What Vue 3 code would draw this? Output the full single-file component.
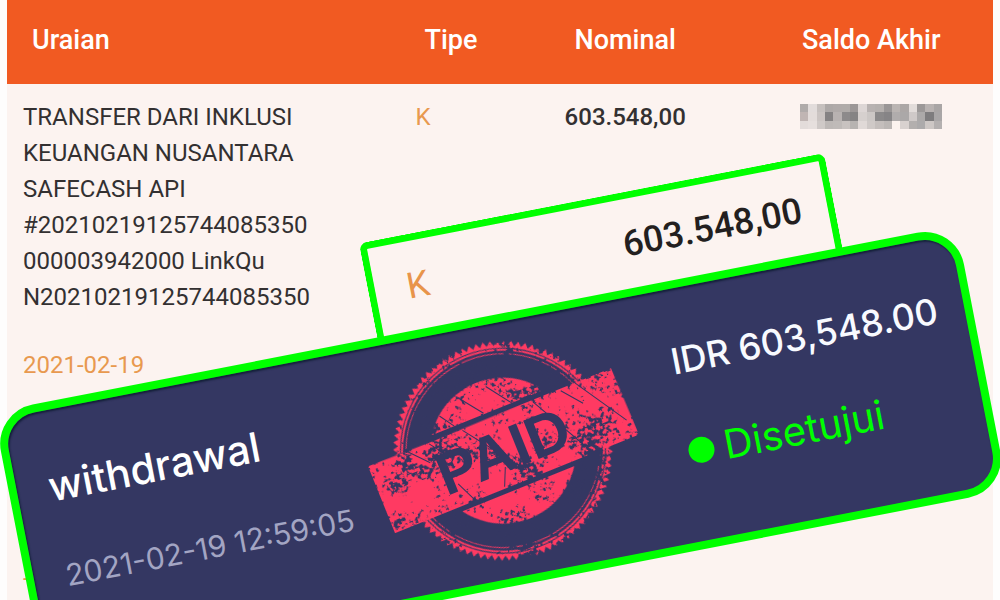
<script setup>
const rows = [
  {
    lines: [
      'TRANSFER DARI INKLUSI',
      'KEUANGAN NUSANTARA',
      'SAFECASH API',
      '#20210219125744085350',
      '000003942000 LinkQu',
      'N20210219125744085350',
    ],
    date: '2021-02-19',
    type: 'K',
    amount: '603.548,00',
  },
]

const mosaic = [
  'b0abaa e2dcdb c6c0be ada8a7 b0aaa9 b0aba9 9c9797 ddd6d5 b8b2b1 b5b0ae 9a9696 bab4b2 aca7a6 e2dcda 9c9898 b8b2b1 a9a5a5',
  'c0b5b3 e3dcda cbc4c2 858283 b8b2b1 8d8a8b 858384 d6d0ce ccc7c5 8b898a 868486 b0acac aba8a8 cfc9c8 aca9a9 7e7c7e a9a6a7',
  'e3dcda e6dfdd cfc9c7 bdb8b6 bfbab8 c8c2c0 b7b3b1 e0d9d7 cfc9c7 c4bebc bcb7b5 fcf3ef d8d1cf b3afae acaaab cdc7c5 b4b0b0',
].map((r) => r.split(' '))

const TEETH = 96
const gear = Array.from({ length: TEETH * 2 }, (_, i) => {
  const a = (Math.PI * i) / TEETH
  const r = i % 2 ? 105 : 110
  return `${(r * Math.cos(a)).toFixed(2)},${(r * Math.sin(a)).toFixed(2)}`
}).join(' ')

const scratches = [
  [-46, -56, -36, -41], [-22, -66, -4, -42], [8, -66, 26, -41], [-66, -34, -50, -12],
  [-30, -34, -8, -4], [46, -34, 82, 34], [92, -36, 126, 18], [-54, 14, -44, 36],
  [-4, 16, -12, 34], [76, -34, 92, -14], [-90, -36, -72, -16],
]
</script>

<template>
  <main class="page">
    <table class="ledger">
      <colgroup>
        <col class="c-desc" /><col class="c-type" /><col class="c-amount" /><col class="c-balance" />
      </colgroup>
      <thead>
        <tr>
          <th class="left">Uraian</th>
          <th class="left">Tipe</th>
          <th>Nominal</th>
          <th>Saldo Akhir</th>
        </tr>
      </thead>
      <tbody>
        <tr v-for="row in rows" :key="row.date">
          <td>
            <div v-for="line in row.lines" :key="line">{{ line }}</div>
            <div class="date">{{ row.date }}</div>
          </td>
          <td class="type">{{ row.type }}</td>
          <td class="amount">{{ row.amount }}</td>
          <td class="balance">
            <svg class="mosaic" viewBox="0 0 17 3" preserveAspectRatio="none" shape-rendering="crispEdges" role="img" aria-label="Saldo disamarkan">
              <template v-for="(r, y) in mosaic" :key="y">
                <rect v-for="(c, x) in r" :key="x" :x="x" :y="y" width="1" height="1" :fill="'#' + c" />
              </template>
            </svg>
          </td>
        </tr>
        <tr>
          <td class="next">-</td>
          <td></td>
          <td></td>
          <td></td>
        </tr>
      </tbody>
    </table>

    <section class="proof">
      <div class="strip">
        <span class="strip-type">K</span>
        <strong class="strip-amount">603.548,00</strong>
      </div>
      <article class="card">
        <div class="info">
          <h2 class="title">withdrawal</h2>
          <time class="time">2021-02-19 12:59:05</time>
        </div>
        <div class="result">
          <div class="sum">IDR 603,548.00</div>
          <div class="status"><i class="dot"></i>Disetujui</div>
        </div>
        <svg class="stamp" viewBox="-136 -136 272 272" role="img" aria-label="PAID">
          <defs>
            <filter id="grunge" filterUnits="userSpaceOnUse" x="-136" y="-136" width="272" height="272" color-interpolation-filters="sRGB">
              <feTurbulence type="fractalNoise" baseFrequency="0.24" numOctaves="3" seed="7" result="fine" />
              <feTurbulence type="fractalNoise" baseFrequency="0.03" numOctaves="2" seed="12" result="coarse" />
              <feComposite in="fine" in2="coarse" operator="arithmetic" k2="0.5" k3="0.5" result="mix" />
              <feColorMatrix in="mix" type="matrix" values="0 0 0 0 0  0 0 0 0 0  0 0 0 0 0  24 0 0 0 -13.2" result="holes" />
              <feComposite in="SourceGraphic" in2="holes" operator="out" />
            </filter>
            <clipPath id="caps">
              <path d="M-80-80H80V-41H-80ZM-80 41H80V80H-80Z" />
            </clipPath>
            <clipPath id="rim">
              <path d="M-120-120H120V-36H-120ZM-120 36H120V120H-120Z" />
            </clipPath>
          </defs>
          <g transform="rotate(-11)">
            <g filter="url(#grunge)">
              <g clip-path="url(#rim)">
                <polygon class="ink" :points="gear" />
                <circle class="paper" r="103" />
                <circle class="ring" r="101" />
                <circle class="ring thin" r="97" />
              </g>
              <circle class="ink" r="73" clip-path="url(#caps)" />
              <path class="ink" d="M-131-36 -60-35 40-36 131-36 132 34 129 36 20 36-131 36Z" />
            </g>
            <line v-for="(s, i) in scratches" :key="i" class="scratch" :x1="s[0]" :y1="s[1]" :x2="s[2]" :y2="s[3]" />
            <text class="paid" x="0" y="21">PAID</text>
          </g>
        </svg>
      </article>
    </section>
  </main>
</template>

<style>
body {
  margin: 0;
  background: #fefdfd;
}
</style>

<style scoped>
.page {
  position: relative;
  box-sizing: border-box;
  height: 100vh;
  padding: 0 7px;
  overflow: hidden;
  background: #fefdfd;
  font-family: Roboto, "Liberation Sans", sans-serif;
  color: #333031;
}
.ledger {
  width: 100%;
  min-height: 100vh;
  table-layout: fixed;
  border-collapse: collapse;
  background: #fcf3f0;
  font-size: 24px;
  line-height: 36px;
}
.c-desc { width: 39.8%; }
.c-type { width: 10.3%; }
.c-amount { width: 25.2%; }
.c-balance { width: 24.7%; }
th {
  height: 84px;
  box-sizing: border-box;
  padding: 0 0 4px;
  background: #f15a22;
  color: #fff;
  font-size: 27px;
  font-weight: 500;
  text-align: center;
}
th.left {
  padding-left: 25px;
  text-align: left;
}
td {
  padding: 15px 0 0 16px;
  vertical-align: top;
}
.date {
  margin-top: 32px;
  color: #e8994f;
}
.type, .next { color: #e8994f; }
.next { padding-top: 172px; }
td.amount {
  padding-left: 0;
  font-weight: 500;
  text-align: center;
}
td.balance {
  padding-left: 0;
  text-align: center;
}
.mosaic {
  display: block;
  width: 142px;
  height: 25px;
  margin: 5px auto 0;
}
.proof {
  position: absolute;
  top: 318px;
  left: -25px;
  width: 981px;
  transform: rotate(-11deg);
  transform-origin: 0 0;
}
.strip {
  display: flex;
  justify-content: space-between;
  box-sizing: border-box;
  width: 474px;
  height: 100px;
  margin: 0 0 -4px 391px;
  padding: 24px 26px 0 32px;
  border: 7px solid #00ff00;
  border-bottom: 0;
  border-radius: 8px 8px 0 0;
  background: #fcf3f0;
  font-size: 36px;
  line-height: 42px;
}
.strip-type { color: #e8944a; }
.strip-amount {
  color: #231f20;
  font-weight: 500;
}
.card {
  position: relative;
  display: flex;
  justify-content: space-between;
  box-sizing: border-box;
  height: 270px;
  padding: 50px 28px 0 32px;
  border: 8px solid #00ff00;
  border-radius: 40px;
  background: #343762;
  box-shadow: inset 1px 2px 2px #14203a;
  font-family: Inter, "Open Sans", sans-serif;
  white-space: nowrap;
}
.info, .result {
  display: flex;
  flex-direction: column;
  gap: 42px;
}
.result { width: 270px; }
.title {
  margin: 0;
  color: #fff;
  font-size: 41px;
  font-weight: 500;
  line-height: 52px;
}
.time {
  color: #a3a5c3;
  font-size: 30px;
  line-height: 44px;
}
.sum {
  color: #f8faff;
  font-size: 36px;
  font-weight: 500;
  line-height: 44px;
}
.status {
  display: flex;
  align-items: center;
  gap: 10px;
  color: #00ff00;
  font-size: 40px;
  line-height: 56px;
}
.dot {
  width: 26px;
  height: 26px;
  border-radius: 50%;
  background: #00ff00;
}
.stamp {
  position: absolute;
  top: 50%;
  left: 50%;
  width: 272px;
  height: 272px;
  margin: -136px 0 0 -134px;
}
.ink { fill: #ff3a62; }
.paper { fill: #343762; }
.ring {
  fill: none;
  stroke: #ff3a62;
  stroke-width: 2;
}
.thin { stroke-width: 1; }
.scratch {
  stroke: #343762;
  stroke-width: 1;
}
.paid {
  fill: #343762;
  font: 700 60px "Liberation Sans", sans-serif;
  text-anchor: middle;
}
</style>
